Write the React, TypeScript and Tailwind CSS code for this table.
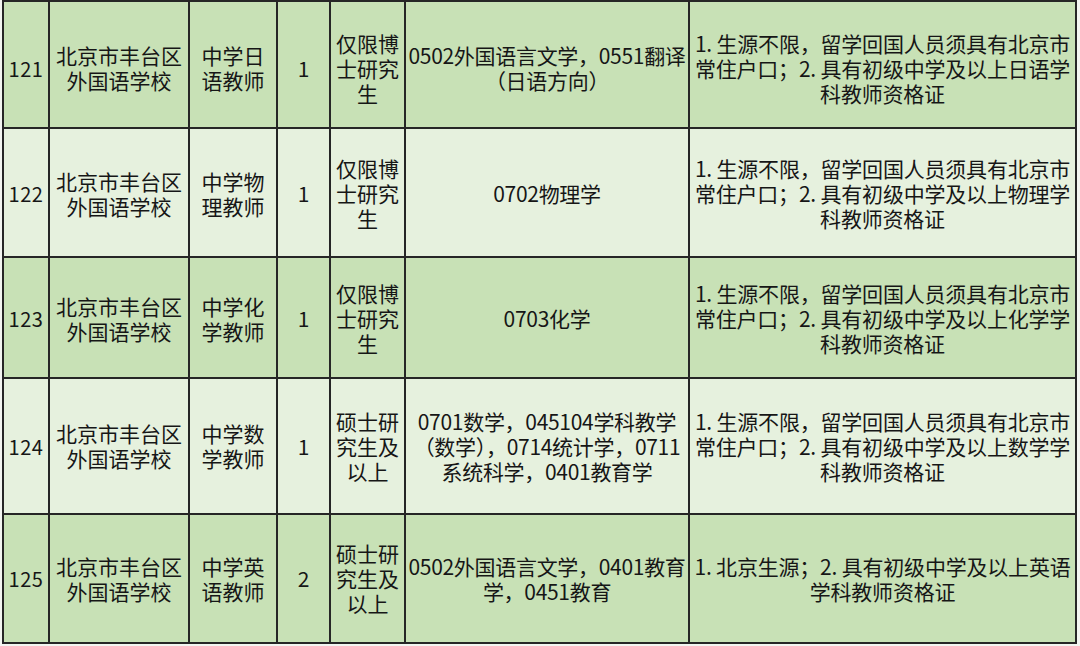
const rows = [
  {
    no: '121',
    unit: ['北京市丰台区', '外国语学校'],
    post: ['中学日', '语教师'],
    count: '1',
    degree: ['仅限博', '士研究', '生'],
    major: ['0502外国语言文学，0551翻译', '（日语方向）'],
    req: ['1. 生源不限，留学回国人员须具有北京市', '常住户口；2. 具有初级中学及以上日语学', '科教师资格证'],
    h: 'h-[127px]',
    bg: 'bg-[#c8e1b6]',
    pad: 'pt-[7px]',
  },
  {
    no: '122',
    unit: ['北京市丰台区', '外国语学校'],
    post: ['中学物', '理教师'],
    count: '1',
    degree: ['仅限博', '士研究', '生'],
    major: ['0702物理学'],
    req: ['1. 生源不限，留学回国人员须具有北京市', '常住户口；2. 具有初级中学及以上物理学', '科教师资格证'],
    h: 'h-[129px]',
    bg: 'bg-[#e6f1de]',
    pad: 'pt-[2px]',
  },
  {
    no: '123',
    unit: ['北京市丰台区', '外国语学校'],
    post: ['中学化', '学教师'],
    count: '1',
    degree: ['仅限博', '士研究', '生'],
    major: ['0703化学'],
    req: ['1. 生源不限，留学回国人员须具有北京市', '常住户口；2. 具有初级中学及以上化学学', '科教师资格证'],
    h: 'h-[121px]',
    bg: 'bg-[#c8e1b6]',
    pad: 'pt-[2px]',
  },
  {
    no: '124',
    unit: ['北京市丰台区', '外国语学校'],
    post: ['中学数', '学教师'],
    count: '1',
    degree: ['硕士研', '究生及', '以上'],
    major: ['0701数学，045104学科教学', '（数学），0714统计学，0711', '系统科学，0401教育学'],
    req: ['1. 生源不限，留学回国人员须具有北京市', '常住户口；2. 具有初级中学及以上数学学', '科教师资格证'],
    h: 'h-[136px]',
    bg: 'bg-[#e6f1de]',
    pad: 'pt-0',
  },
  {
    no: '125',
    unit: ['北京市丰台区', '外国语学校'],
    post: ['中学英', '语教师'],
    count: '2',
    degree: ['硕士研', '究生及', '以上'],
    major: ['0502外国语言文学，0401教育', '学，0451教育'],
    req: ['1. 北京生源；2. 具有初级中学及以上英语', '学科教师资格证'],
    h: 'h-[129px]',
    bg: 'bg-[#c8e1b6]',
    pad: 'pt-0',
  },
];

const Lines = ({ lines }: { lines: string[] }) => (
  <>
    {lines.map((l, i) => (
      <div key={i} className="whitespace-nowrap">
        {l}
      </div>
    ))}
  </>
);

const cell = 'border-2 border-[#262626] text-center align-middle px-0 pb-0';

export default function App() {
  return (
    <div className="w-[1080px] h-[646px] bg-[#f3f5f1] overflow-hidden pl-[2px]">
      <table
        className="table-fixed border-collapse w-[1075px] text-[#161616] text-[21px] leading-[25px]"
        style={{ fontFamily: '"Noto Sans CJK SC", "Noto Sans", sans-serif' }}
      >
        <colgroup>
          <col className="w-[46px]" />
          <col className="w-[140px]" />
          <col className="w-[88px]" />
          <col className="w-[53px]" />
          <col className="w-[75px]" />
          <col className="w-[284px]" />
          <col className="w-[387px]" />
        </colgroup>
        <tbody>
          {rows.map((r) => (
            <tr key={r.no} className={`${r.h} ${r.bg}`}>
              <td className={`${cell} ${r.pad} text-[20px] tracking-[0.5px]`}>{r.no}</td>
              <td className={`${cell} ${r.pad}`}>
                <Lines lines={r.unit} />
              </td>
              <td className={`${cell} ${r.pad}`}>
                <Lines lines={r.post} />
              </td>
              <td className={`${cell} ${r.pad}`}>{r.count}</td>
              <td className={`${cell} ${r.pad}`}>
                <Lines lines={r.degree} />
              </td>
              <td className={`${cell} ${r.pad} tracking-[-0.3px]`}>
                <Lines lines={r.major} />
              </td>
              <td className={`${cell} ${r.pad} tracking-[-0.2px]`}>
                <Lines lines={r.req} />
              </td>
            </tr>
          ))}
        </tbody>
      </table>
    </div>
  );
}
